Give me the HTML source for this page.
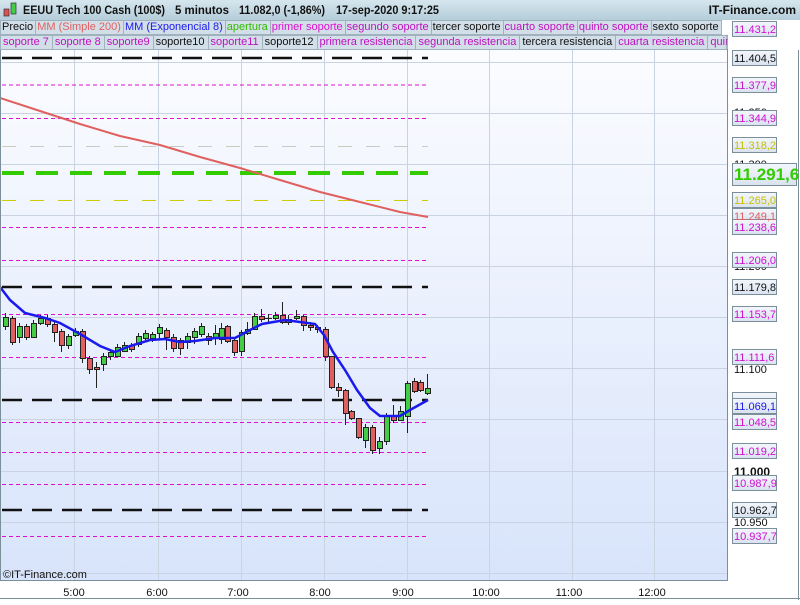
<!DOCTYPE html>
<html><head><meta charset="utf-8"><style>
body{margin:0;width:800px;height:600px;overflow:hidden;background:#fff;font-family:"Liberation Sans",sans-serif}
.r span{background:#d2dfe8;border:1px solid #9fb2bd;border-left:none;padding:0 2px 0 1px}
.r2 span{padding:0 3px 0 2px}
</style></head><body>
<svg width="800" height="600" xmlns="http://www.w3.org/2000/svg" font-family="Liberation Sans, sans-serif">
<defs>
<linearGradient id="bg" x1="0" y1="0" x2="0" y2="1"><stop offset="0" stop-color="#fbfcff"/><stop offset="1" stop-color="#d8e4fb"/></linearGradient>
<linearGradient id="tb" x1="0" y1="0" x2="0" y2="1"><stop offset="0" stop-color="#d6e6ee"/><stop offset="1" stop-color="#b4cdda"/></linearGradient>
<linearGradient id="lb" x1="0" y1="0" x2="0" y2="1"><stop offset="0" stop-color="#f4f7fc"/><stop offset="1" stop-color="#d9e2f0"/></linearGradient>
</defs>
<rect x="0" y="0" width="800" height="600" fill="#fff"/>
<rect x="0" y="50" width="727" height="530" fill="url(#bg)"/>
<g stroke="#c9d3e2" stroke-width="1">
<line x1="0" y1="62.5" x2="727" y2="62.5"/><line x1="0" y1="113.5" x2="727" y2="113.5"/><line x1="0" y1="164.5" x2="727" y2="164.5"/><line x1="0" y1="215.5" x2="727" y2="215.5"/><line x1="0" y1="266.5" x2="727" y2="266.5"/><line x1="0" y1="317.5" x2="727" y2="317.5"/><line x1="0" y1="368.5" x2="727" y2="368.5"/><line x1="0" y1="419.5" x2="727" y2="419.5"/><line x1="0" y1="471.5" x2="727" y2="471.5"/><line x1="0" y1="522.5" x2="727" y2="522.5"/><line x1="0" y1="573.5" x2="727" y2="573.5"/>
<line x1="74.5" y1="50" x2="74.5" y2="580"/><line x1="158.5" y1="50" x2="158.5" y2="580"/><line x1="241.5" y1="50" x2="241.5" y2="580"/><line x1="324.5" y1="50" x2="324.5" y2="580"/><line x1="407.5" y1="50" x2="407.5" y2="580"/><line x1="489.5" y1="50" x2="489.5" y2="580"/><line x1="572.5" y1="50" x2="572.5" y2="580"/><line x1="654.5" y1="50" x2="654.5" y2="580"/>
</g>
<g fill="none">
<g stroke="#111" stroke-width="2.5" stroke-dasharray="20,10">
<line x1="2" y1="58" x2="428" y2="58"/><line x1="2" y1="287" x2="428" y2="287"/><line x1="2" y1="400" x2="428" y2="400"/><line x1="2" y1="510" x2="428" y2="510"/></g>
<g stroke="#e010d0" stroke-width="1" stroke-dasharray="4,3">
<line x1="2" y1="85" x2="428" y2="85"/><line x1="2" y1="118.5" x2="428" y2="118.5"/><line x1="2" y1="227.5" x2="428" y2="227.5"/><line x1="2" y1="260.5" x2="428" y2="260.5"/><line x1="2" y1="314.5" x2="428" y2="314.5"/><line x1="2" y1="357.5" x2="428" y2="357.5"/><line x1="2" y1="422.5" x2="428" y2="422.5"/><line x1="2" y1="452.5" x2="428" y2="452.5"/><line x1="2" y1="484.5" x2="428" y2="484.5"/><line x1="2" y1="536.5" x2="428" y2="536.5"/></g>
<g stroke="#cccc00" stroke-width="1" stroke-dasharray="14,14"><line x1="2" y1="200.5" x2="428" y2="200.5"/></g>
<g stroke="#c8ccc0" stroke-width="1" stroke-dasharray="14,14"><line x1="2" y1="146.5" x2="428" y2="146.5"/></g>
<g stroke="#33cc00" stroke-width="4" stroke-dasharray="22,12"><line x1="2" y1="173" x2="428" y2="173"/></g>
<polyline stroke="#e06060" stroke-width="2" points="0,98 40,111 80,124 120,136 160,145 200,157 240,168 280,180 320,192 360,202 400,212 428,217"/>
</g>
<g stroke="#222" stroke-width="1">
<line x1="5.5" y1="313" x2="5.5" y2="330"/><rect x="3.5" y="317.5" width="5" height="9" fill="#44cc44"/>
<line x1="12.5" y1="316" x2="12.5" y2="345"/><rect x="10.5" y="318.5" width="5" height="24" fill="#e06060"/>
<line x1="19.5" y1="323" x2="19.5" y2="343"/><rect x="17.5" y="326.5" width="5" height="11" fill="#44cc44"/>
<line x1="26.5" y1="324" x2="26.5" y2="340"/><rect x="24.5" y="326.5" width="5" height="11" fill="#e06060"/>
<line x1="33.5" y1="320" x2="33.5" y2="338"/><rect x="31.5" y="323.5" width="5" height="14" fill="#44cc44"/>
<line x1="40.5" y1="315" x2="40.5" y2="325"/><rect x="38.5" y="318.5" width="5" height="5" fill="#44cc44"/>
<line x1="47.5" y1="315" x2="47.5" y2="327"/><rect x="45.5" y="318.5" width="5" height="6" fill="#e06060"/>
<line x1="54.5" y1="320" x2="54.5" y2="342"/><rect x="52.5" y="324.5" width="5" height="8" fill="#e06060"/>
<line x1="61.5" y1="329" x2="61.5" y2="352"/><rect x="59.5" y="331.5" width="5" height="14" fill="#e06060"/>
<line x1="68.5" y1="334" x2="68.5" y2="349"/><rect x="66.5" y="336.5" width="5" height="9" fill="#44cc44"/>
<line x1="75.5" y1="328" x2="75.5" y2="337"/><rect x="73.5" y="331.5" width="5" height="4" fill="#44cc44"/>
<line x1="82.5" y1="329" x2="82.5" y2="363"/><rect x="80.5" y="331.5" width="5" height="27" fill="#e06060"/>
<line x1="89.5" y1="356" x2="89.5" y2="374"/><rect x="87.5" y="358.5" width="5" height="11" fill="#e06060"/>
<line x1="96.5" y1="362" x2="96.5" y2="388"/><rect x="94.5" y="367.5" width="5" height="2" fill="#e06060"/>
<line x1="103.5" y1="353" x2="103.5" y2="371"/><rect x="101.5" y="356.5" width="5" height="8" fill="#44cc44"/>
<line x1="110.5" y1="350" x2="110.5" y2="360"/><rect x="108.5" y="352.5" width="5" height="4" fill="#44cc44"/>
<line x1="117.5" y1="344" x2="117.5" y2="357"/><rect x="115.5" y="347.5" width="5" height="9" fill="#44cc44"/>
<line x1="124.5" y1="342" x2="124.5" y2="352"/><rect x="122.5" y="345.5" width="5" height="6" fill="#44cc44"/>
<line x1="131.5" y1="343" x2="131.5" y2="352"/><rect x="129.5" y="345.5" width="5" height="4" fill="#e06060"/>
<line x1="138.5" y1="333" x2="138.5" y2="347"/><rect x="136.5" y="336.5" width="5" height="8" fill="#44cc44"/>
<line x1="145.5" y1="330" x2="145.5" y2="341"/><rect x="143.5" y="333.5" width="5" height="5" fill="#44cc44"/>
<line x1="152.5" y1="332" x2="152.5" y2="342"/><rect x="150.5" y="334.5" width="5" height="4" fill="#44cc44"/>
<line x1="159.5" y1="324" x2="159.5" y2="340"/><rect x="157.5" y="327.5" width="5" height="6" fill="#44cc44"/>
<line x1="166.5" y1="328" x2="166.5" y2="350"/><rect x="164.5" y="330.5" width="5" height="7" fill="#e06060"/>
<line x1="173.5" y1="334" x2="173.5" y2="352"/><rect x="171.5" y="337.5" width="5" height="11" fill="#e06060"/>
<line x1="180.5" y1="338" x2="180.5" y2="355"/><rect x="178.5" y="340.5" width="5" height="8" fill="#e06060"/>
<line x1="187.5" y1="333" x2="187.5" y2="349"/><rect x="185.5" y="336.5" width="5" height="6" fill="#44cc44"/>
<line x1="194.5" y1="328" x2="194.5" y2="344"/><rect x="192.5" y="331.5" width="5" height="6" fill="#44cc44"/>
<line x1="201.5" y1="323" x2="201.5" y2="337"/><rect x="199.5" y="326.5" width="5" height="8" fill="#44cc44"/>
<line x1="208.5" y1="333" x2="208.5" y2="345"/><rect x="206.5" y="336.5" width="5" height="4" fill="#e06060"/>
<line x1="215.5" y1="325" x2="215.5" y2="345"/><rect x="213.5" y="333.5" width="5" height="4" fill="#44cc44"/>
<line x1="221.5" y1="323" x2="221.5" y2="344"/><rect x="219.5" y="328.5" width="5" height="11" fill="#44cc44"/>
<line x1="227.5" y1="325" x2="227.5" y2="343"/><rect x="225.5" y="326.5" width="5" height="15" fill="#e06060"/>
<line x1="234.5" y1="338" x2="234.5" y2="356"/><rect x="232.5" y="340.5" width="5" height="12" fill="#e06060"/>
<line x1="241.5" y1="330" x2="241.5" y2="356"/><rect x="239.5" y="332.5" width="5" height="19" fill="#44cc44"/>
<line x1="247.5" y1="322" x2="247.5" y2="335"/><rect x="245.5" y="329.5" width="5" height="4" fill="#44cc44"/>
<line x1="254.5" y1="313" x2="254.5" y2="330"/><rect x="252.5" y="316.5" width="5" height="13" fill="#44cc44"/>
<line x1="261.5" y1="309" x2="261.5" y2="322"/><rect x="259.5" y="316.5" width="5" height="3" fill="#e06060"/>
<line x1="268.5" y1="314" x2="268.5" y2="322"/><line x1="265" y1="318.5" x2="272" y2="318.5"/>
<line x1="275.5" y1="312" x2="275.5" y2="320"/><rect x="273.5" y="315.5" width="5" height="3" fill="#44cc44"/>
<line x1="282.5" y1="302" x2="282.5" y2="324"/><rect x="280.5" y="315.5" width="5" height="7" fill="#e06060"/>
<line x1="288.5" y1="315" x2="288.5" y2="325"/><rect x="286.5" y="319.5" width="5" height="3" fill="#44cc44"/>
<line x1="296.5" y1="310" x2="296.5" y2="320"/><rect x="294.5" y="316.5" width="5" height="2" fill="#44cc44"/>
<line x1="303.5" y1="315" x2="303.5" y2="331"/><rect x="301.5" y="316.5" width="5" height="9" fill="#e06060"/>
<line x1="310.5" y1="322" x2="310.5" y2="331"/><rect x="308.5" y="325.5" width="5" height="2" fill="#e06060"/>
<line x1="317.5" y1="325" x2="317.5" y2="333"/><rect x="315.5" y="327.5" width="5" height="2" fill="#e06060"/>
<line x1="325.5" y1="327" x2="325.5" y2="361"/><rect x="323.5" y="329.5" width="5" height="27" fill="#e06060"/>
<line x1="331.5" y1="356" x2="331.5" y2="389"/><rect x="329.5" y="356.5" width="5" height="31" fill="#e06060"/>
<line x1="338.5" y1="383" x2="338.5" y2="397"/><rect x="336.5" y="387.5" width="5" height="3" fill="#e06060"/>
<line x1="345.5" y1="389" x2="345.5" y2="425"/><rect x="343.5" y="390.5" width="5" height="23" fill="#e06060"/>
<line x1="351.5" y1="410" x2="351.5" y2="420"/><rect x="349.5" y="411.5" width="5" height="7" fill="#e06060"/>
<line x1="358.5" y1="418" x2="358.5" y2="439"/><rect x="356.5" y="418.5" width="5" height="19" fill="#e06060"/>
<line x1="365.5" y1="424" x2="365.5" y2="448"/><rect x="363.5" y="427.5" width="5" height="13" fill="#44cc44"/>
<line x1="372.5" y1="425" x2="372.5" y2="454"/><rect x="370.5" y="427.5" width="5" height="23" fill="#e06060"/>
<line x1="379.5" y1="437" x2="379.5" y2="454"/><rect x="377.5" y="441.5" width="5" height="7" fill="#44cc44"/>
<line x1="386.5" y1="413" x2="386.5" y2="445"/><rect x="384.5" y="416.5" width="5" height="25" fill="#44cc44"/>
<line x1="393.5" y1="405" x2="393.5" y2="423"/><rect x="391.5" y="416.5" width="5" height="4" fill="#e06060"/>
<line x1="400.5" y1="406" x2="400.5" y2="421"/><rect x="398.5" y="411.5" width="5" height="9" fill="#44cc44"/>
<line x1="407.5" y1="381" x2="407.5" y2="433"/><rect x="405.5" y="383.5" width="5" height="33" fill="#44cc44"/>
<line x1="414.5" y1="378" x2="414.5" y2="393"/><rect x="412.5" y="381.5" width="5" height="10" fill="#e06060"/>
<line x1="420.5" y1="380" x2="420.5" y2="392"/><rect x="418.5" y="382.5" width="5" height="8" fill="#e06060"/>
<line x1="427.5" y1="374" x2="427.5" y2="395"/><rect x="425.5" y="388.5" width="5" height="5" fill="#44cc44"/>
</g>
<polyline fill="none" stroke="#1a1aee" stroke-width="2.5" points="0,287 10,300 25,313 45,318 60,323 80,334 100,346 115,352 130,346 150,340 165,339 180,342 195,341 215,338 235,338 250,330 262,324 285,320 300,322 315,324 324,335 333,352 345,370 357,390 370,408 380,416 400,416 410,410 428,400"/>
<line x1="0.5" y1="50" x2="0.5" y2="580" stroke="#7a8f9a"/>
<line x1="727.5" y1="35" x2="727.5" y2="580" stroke="#7a8f9a"/>
<line x1="0" y1="580.5" x2="728" y2="580.5" stroke="#7a8f9a"/>
<line x1="798.5" y1="50" x2="798.5" y2="600" stroke="#7a8f9a"/>
<line x1="0" y1="598.5" x2="800" y2="598.5" stroke="#7a8f9a"/>
<text x="3" y="578" font-size="11" fill="#111">©IT-Finance.com</text>
<g font-size="11" fill="#111" text-anchor="middle">
<text x="74" y="596">5:00</text><text x="157" y="596">6:00</text><text x="238" y="596">7:00</text><text x="320" y="596">8:00</text><text x="403" y="596">9:00</text><text x="486" y="596">10:00</text><text x="569" y="596">11:00</text><text x="652" y="596">12:00</text>
</g>
<rect x="0" y="0" width="800" height="20" fill="url(#tb)"/>
<rect x="4" y="9" width="5" height="7" fill="#e05050" stroke="#333" stroke-width="0.7"/><rect x="11" y="3" width="5" height="11" fill="#44cc44" stroke="#333" stroke-width="0.7"/>
<g font-size="12" font-weight="bold" fill="#111">
<text x="23" y="14" textLength="142" lengthAdjust="spacingAndGlyphs">EEUU Tech 100 Cash (100$)</text><text x="175" y="14" textLength="54" lengthAdjust="spacingAndGlyphs">5 minutos</text><text x="239" y="14" textLength="86" lengthAdjust="spacingAndGlyphs">11.082,0 (-1,86%)</text><text x="336" y="14" textLength="103" lengthAdjust="spacingAndGlyphs">17-sep-2020 9:17:25</text>
<text x="796" y="14" text-anchor="end">IT-Finance.com</text></g>
<rect x="0" y="20" width="800" height="30" fill="#fff"/>
</svg>
<div style="position:absolute;left:0;top:20px;width:730px;font-size:11px;line-height:13px;font-family:'Liberation Sans',sans-serif">
<div class="r" style="display:flex;height:15px;overflow:hidden;white-space:nowrap;border-left:1px solid #9fb2bd">
<span style="color:#111">Precio</span><span style="color:#e06060">MM (Simple 200)</span><span style="color:#1a1aee">MM (Exponencial 8)</span><span style="color:#33bb00">apertura</span><span style="color:#e010d0">primer soporte</span><span style="color:#c010c0">segundo soporte</span><span style="color:#111">tercer soporte</span><span style="color:#c010c0">cuarto soporte</span><span style="color:#c010c0">quinto soporte</span><span style="color:#111">sexto soporte</span>
</div>
<div class="r r2" style="display:flex;height:15px;overflow:hidden;white-space:nowrap;width:727px;border-left:1px solid #9fb2bd">
<span style="color:#c010c0">soporte 7</span><span style="color:#c010c0">soporte 8</span><span style="color:#c010c0">soporte9</span><span style="color:#111">soporte10</span><span style="color:#c010c0">soporte11</span><span style="color:#111">soporte12</span><span style="color:#c010c0">primera resistencia</span><span style="color:#c010c0">segunda resistencia</span><span style="color:#111">tercera resistencia</span><span style="color:#c010c0">cuarta resistencia</span><span style="color:#c010c0">quinta</span>
</div>
</div>
<svg style="position:absolute;left:0;top:0" width="800" height="600" font-family="Liberation Sans, sans-serif" font-size="11">
<line x1="727" y1="35" x2="727" y2="50" stroke="#7a8f9a"/>
<g font-size="11" fill="#111">
<text x="734" y="116">11.350</text><text x="734" y="168">11.300</text><text x="734" y="270">11.200</text><text x="734" y="373">11.100</text><text x="734" y="424">11.050</text><text x="734" y="526">10.950</text>
<text x="734" y="476" font-weight="bold" font-size="12">11.000</text>
</g>
<g stroke="#7a8f9a" fill="url(#lb)">
<rect x="732.5" y="21.5" width="44" height="15"/><rect x="732.5" y="50.5" width="44" height="15"/><rect x="732.5" y="77.5" width="44" height="15"/><rect x="732.5" y="110.5" width="44" height="15"/><rect x="732.5" y="137.5" width="44" height="15"/><rect x="732.5" y="192.5" width="44" height="15"/><rect x="732.5" y="208.5" width="44" height="13"/><rect x="732.5" y="219.5" width="44" height="15"/><rect x="732.5" y="252.5" width="44" height="15"/><rect x="732.5" y="279.5" width="44" height="15"/><rect x="732.5" y="306.5" width="44" height="15"/><rect x="732.5" y="349.5" width="44" height="15"/><rect x="732.5" y="392.5" width="44" height="15"/><rect x="732.5" y="398.5" width="44" height="15"/><rect x="732.5" y="414.5" width="44" height="15"/><rect x="732.5" y="443.5" width="44" height="15"/><rect x="732.5" y="475.5" width="44" height="15"/><rect x="732.5" y="502.5" width="44" height="15"/><rect x="732.5" y="528.5" width="44" height="15"/>
<rect x="732.5" y="163.5" width="64" height="22"/>
</g>
<g>
<text x="734" y="33" fill="#d010d0">11.431,2</text><text x="734" y="62" fill="#111">11.404,5</text><text x="734" y="89" fill="#d010d0">11.377,9</text><text x="734" y="122" fill="#d010d0">11.344,9</text><text x="734" y="149" fill="#c8c000">11.318,2</text>
<text x="734" y="180" fill="#33cc00" font-size="17" font-weight="bold">11.291,6</text>
<text x="734" y="204" fill="#c8c000">11.265,0</text><text x="734" y="220" fill="#e06060">11.249,1</text><text x="734" y="231" fill="#d010d0">11.238,6</text><text x="734" y="264" fill="#d010d0">11.206,0</text><text x="734" y="291" fill="#111">11.179,8</text><text x="734" y="318" fill="#d010d0">11.153,7</text><text x="734" y="361" fill="#d010d0">11.111,6</text><text x="734" y="410" fill="#1a1aee">11.069,1</text><text x="734" y="426" fill="#d010d0">11.048,5</text><text x="734" y="455" fill="#d010d0">11.019,2</text><text x="734" y="487" fill="#d010d0">10.987,9</text><text x="734" y="514" fill="#111">10.962,7</text><text x="734" y="540" fill="#d010d0">10.937,7</text>
</g>
</svg>
</body></html>
